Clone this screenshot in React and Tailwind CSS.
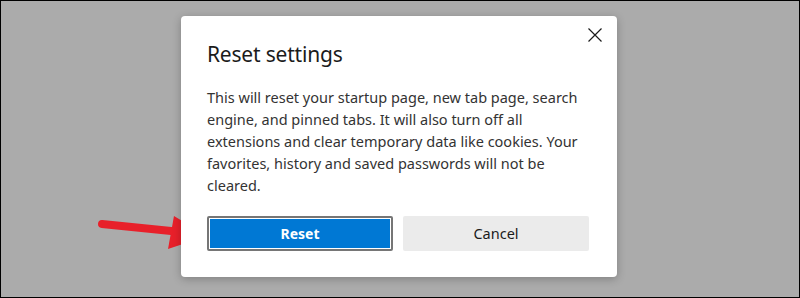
import React from 'react';

const font = { fontFamily: '"Noto Sans", "Open Sans", sans-serif' };

const CloseIcon = () => (
    <svg width="14" height="14" viewBox="0 0 14 14" fill="none" stroke="#1b1b1b" strokeWidth="1.2">
        <path d="M0.5 0.5 L13.5 13.5 M13.5 0.5 L0.5 13.5" />
    </svg>
);

const Arrow = () => (
    <svg className="absolute left-0 top-0" width="800" height="298" viewBox="0 0 800 298">
        <path d="M101 223 L180 231" stroke="#e8202a" strokeWidth="8" strokeLinecap="round" />
        <path d="M173 215 L206 235 L167 248 Z" fill="#e8202a" />
    </svg>
);

export default function App() {
    return (
        <div className="relative w-[800px] h-[298px] bg-[#ababab] border border-black overflow-hidden" style={font}>
            <Arrow />
            <div className="relative ml-[180px] mt-[15px] w-[436px] h-[261px] bg-white rounded-[4px] shadow-[0_2px_8px_rgba(0,0,0,0.25)] pl-[26px] pr-[28px] pt-[24px]">
                <button className="absolute right-[15px] top-[12px] w-[14px] h-[14px]">
                    <CloseIcon />
                </button>
                <h2 className="text-[21px] leading-[28px] font-normal text-[#1b1b1b] tracking-[-0.2px]">Reset settings</h2>
                <p className="mt-[18px] text-[14.5px] leading-[22px] text-[#333333] w-[382px]">
                    This will reset your startup page, new tab page, search engine, and pinned tabs. It will also turn off all extensions and clear temporary data like cookies. Your favorites, history and saved passwords will not be cleared.
                </p>
                <div className="flex gap-[10px] mt-[20px]">
                    <button className="w-[186px] h-[35px] border-2 border-[#767676] p-px rounded-[2px]">
                        <span className="flex items-center justify-center w-full h-full bg-[#0078d4] text-white text-[14px] font-bold">Reset</span>
                    </button>
                    <button className="w-[186px] h-[35px] bg-[#ebebeb] rounded-[2px] text-[14.5px] text-[#1b1b1b]">Cancel</button>
                </div>
            </div>
        </div>
    );
}
